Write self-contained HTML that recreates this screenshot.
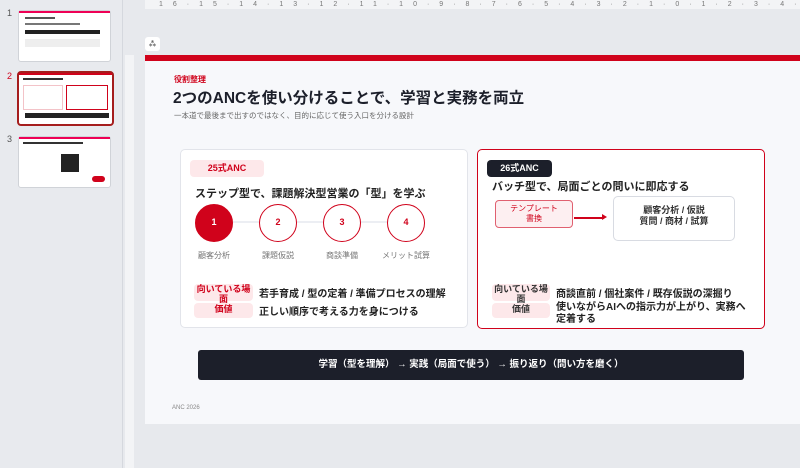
<!DOCTYPE html>
<html><head><meta charset="utf-8"><style>
*{box-sizing:border-box;margin:0;padding:0}
body{width:800px;height:468px;overflow:hidden;background:#e7e9ed;font-family:"Liberation Sans","Noto Sans CJK JP",sans-serif;position:relative}
.a{position:absolute}
.side{left:0;top:0;width:123px;height:468px;background:#e8eaee;border-right:1px solid #d5d8de}
.num{font-size:9px;color:#555}
.thumb{background:#fff;border:1px solid #d0d3d8;border-radius:3px;width:93px;height:52px;left:18px}
.ruler{background:#f3f4f6;color:#777;font-size:7px}
.slide{left:145px;top:55px;width:655px;height:369px;background:#f7f8fb}
.card{background:#fff;border-radius:5px}
.pill{background:#fde8ea;border-radius:4px;color:#d0021b;font-weight:bold;font-size:9px;text-align:center}
.circ{width:38px;height:38px;border-radius:50%;border:1.5px solid #d0021b;color:#d0021b;font-size:9px;font-weight:bold;text-align:center;line-height:35px;background:#fff}
.lab{font-size:8px;color:#777;text-align:center;width:60px}
.t{font-size:10px;font-weight:bold;color:#222;line-height:12px}
</style></head><body>
<div class="a side"></div>
<div class="a num" style="left:7px;top:8px">1</div>
<div class="a thumb" style="top:10px"><div style="height:2px;background:#e05;"></div><div style="margin:4px 6px;height:2px;width:30px;background:#555"></div><div style="margin:2px 6px;height:2px;width:55px;background:#777"></div><div style="margin:5px 6px;height:4px;width:75px;background:#222"></div><div style="margin:3px 6px;height:8px;width:75px;background:#eee"></div></div>
<div class="a num" style="left:7px;top:71px;color:#d0021b">2</div>
<div class="a" style="left:17px;top:71px;width:97px;height:55px;border:2px solid #a51d1d;border-radius:4px;background:#fff"><div style="height:2px;background:#d0021b"></div><div style="margin:3px 4px;height:2px;width:40px;background:#333"></div><div style="position:absolute;left:4px;top:12px;width:40px;height:25px;border:1px solid #f3c3c8"></div><div style="position:absolute;left:47px;top:12px;width:42px;height:25px;border:1px solid #d0021b"></div><div style="position:absolute;left:6px;top:40px;width:84px;height:5px;background:#222"></div></div>
<div class="a num" style="left:7px;top:134px">3</div>
<div class="a thumb" style="top:136px"><div style="height:2px;background:#e05;"></div><div style="margin:3px 4px;height:2px;width:60px;background:#333"></div><div style="position:absolute;left:42px;top:17px;width:18px;height:18px;background:#222"></div><div style="position:absolute;left:73px;top:39px;width:13px;height:6px;border-radius:3px;background:#d0021b"></div></div>

<div class="a ruler" style="left:145px;top:0;width:655px;height:9px;letter-spacing:10px;white-space:nowrap;overflow:hidden;padding-left:14px;line-height:9px">16·15·14·13·12·11·10·9·8·7·6·5·4·3·2·1·0·1·2·3·4·5·6·7·8·9·10·11·12·13·14·15·16</div>
<div class="a ruler" style="left:125px;top:55px;width:9px;height:413px"></div>
<div class="a" style="left:145px;top:37px;width:15px;height:14px;background:#fff;border-radius:3px;font-size:8px;text-align:center;line-height:14px">⁂</div>

<div class="a slide">
<div class="a" style="left:0;top:0;width:655px;height:6px;background:#d0021b"></div>
<div class="a" style="left:29px;top:19px;font-size:8px;font-weight:bold;color:#d0021b">役割整理</div>
<div class="a" style="left:28px;top:31px;font-size:15.5px;font-weight:bold;color:#1c1f2a">2つのANCを使い分けることで、学習と実務を両立</div>
<div class="a" style="left:29px;top:55px;font-size:7.5px;color:#666">一本道で最後まで出すのではなく、目的に応じて使う入口を分ける設計</div>

<div class="a card" style="left:35px;top:94px;width:288px;height:179px;border:1px solid #e2e4ea">
 <div class="a pill" style="left:9px;top:10px;width:74px;height:17px;line-height:17px">25式ANC</div>
 <div class="a" style="left:14px;top:35px;font-size:11px;font-weight:bold;color:#222">ステップ型で、課題解決型営業の「型」を学ぶ</div>
 <div class="a" style="left:30px;top:71px;width:200px;height:2px;background:#eceef3"></div>
 <div class="a circ" style="left:14px;top:54px;background:#d0021b;color:#fff">1</div>
 <div class="a circ" style="left:78px;top:54px">2</div>
 <div class="a circ" style="left:142px;top:54px">3</div>
 <div class="a circ" style="left:206px;top:54px">4</div>
 <div class="a lab" style="left:3px;top:100px">顧客分析</div>
 <div class="a lab" style="left:67px;top:100px">課題仮説</div>
 <div class="a lab" style="left:131px;top:100px">商談準備</div>
 <div class="a lab" style="left:195px;top:100px">メリット試算</div>
 <div class="a pill" style="left:13px;top:134px;width:59px;height:17px;line-height:10px;padding-top:-1px">向いている場面</div>
 <div class="a pill" style="left:13px;top:153px;width:59px;height:15px;line-height:13px">価値</div>
 <div class="a t" style="left:78px;top:139px">若手育成 / 型の定着 / 準備プロセスの理解</div>
 <div class="a t" style="left:78px;top:157px">正しい順序で考える力を身につける</div>
</div>

<div class="a card" style="left:332px;top:94px;width:288px;height:180px;border:1.5px solid #d0021b">
 <div class="a" style="left:9px;top:10px;width:65px;height:17px;line-height:16px;background:#1c1f2a;color:#fff;border-radius:4px;font-size:9px;font-weight:bold;text-align:center">26式ANC</div>
 <div class="a" style="left:14px;top:28px;font-size:11px;font-weight:bold;color:#222">バッチ型で、局面ごとの問いに即応する</div>
 <div class="a" style="left:17px;top:50px;width:78px;height:28px;border:1.5px solid #e06070;background:#fdeff1;border-radius:4px;color:#d0021b;font-size:8px;text-align:center;line-height:10px;padding-top:3px">テンプレート<br>書換</div>
 <div class="a" style="left:96px;top:67px;width:30px;height:1.5px;background:#d0021b"></div>
 <div class="a" style="left:124px;top:64px;border-left:5px solid #d0021b;border-top:3.5px solid transparent;border-bottom:3.5px solid transparent"></div>
 <div class="a" style="left:135px;top:46px;width:122px;height:45px;border:1px solid #d8dbe2;border-radius:5px;font-size:9px;font-weight:bold;color:#333;text-align:center;line-height:11px;padding-top:8px">顧客分析 / 仮説<br>質問 / 商材 / 試算</div>
 <div class="a pill" style="left:14px;top:134px;width:58px;height:17px;line-height:10px;color:#333">向いている場面</div>
 <div class="a pill" style="left:14px;top:153px;width:58px;height:15px;line-height:13px;color:#333">価値</div>
 <div class="a t" style="left:78px;top:139px">商談直前 / 個社案件 / 既存仮説の深掘り</div>
 <div class="a t" style="left:78px;top:152px;width:190px">使いながらAIへの指示力が上がり、実務へ定着する</div>
</div>

<div class="a" style="left:53px;top:295px;width:546px;height:30px;background:#1c1f2a;border-radius:3px;color:#fff;font-size:9.5px;font-weight:bold;text-align:center;line-height:30px">学習（型を理解） → 実践（局面で使う） → 振り返り（問い方を磨く）</div>
<div class="a" style="left:27px;top:350px;font-size:6px;color:#888">ANC 2026</div>
</div>
</body></html>
